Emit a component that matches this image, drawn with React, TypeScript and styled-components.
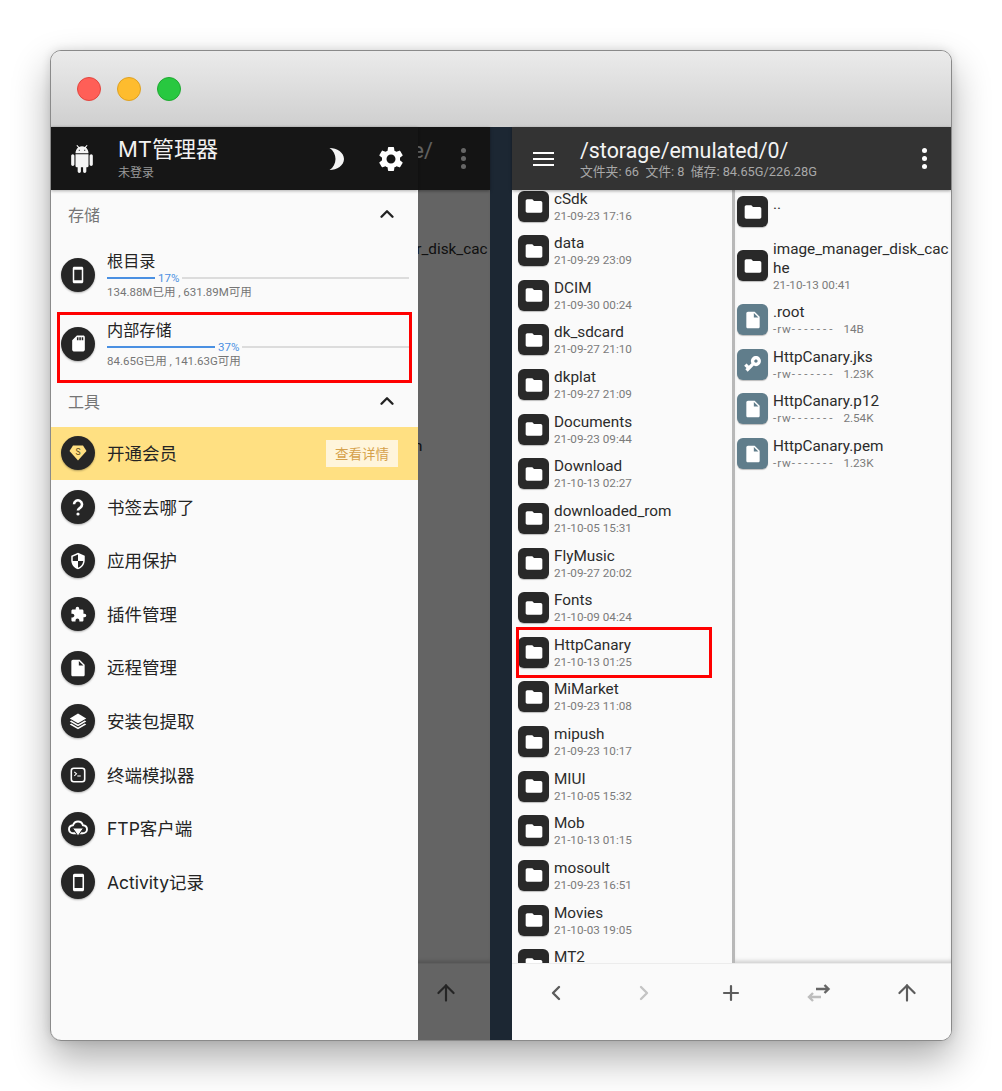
import React from 'react';
import styled, { createGlobalStyle } from 'styled-components';
import { ArrowUp, ChevronLeft, ChevronRight, ChevronUp, Plus } from 'lucide-react';
import {
  MdExtension,
  MdFolder,
  MdInsertDriveFile,
  MdSdStorage,
  MdSecurity,
  MdSettings,
  MdSmartphone,
  MdVpnKey,
} from 'react-icons/md';

const GlobalStyle = createGlobalStyle`
  html, body { margin: 0; padding: 0; background: #fff; }
  body { font-family: Roboto, "Noto Sans CJK SC", sans-serif; }
  * { box-sizing: border-box; }
`;

const Page = styled.div`
  width: 1002px;
  height: 1091px;
  padding: 50px;
  overflow: hidden;
`;

const Window = styled.div`
  width: 902px;
  height: 991px;
  border: 1px solid #8a8a8a;
  border-radius: 11px;
  overflow: hidden;
  box-shadow: 0 18px 38px rgba(0, 0, 0, 0.32), 0 0 10px rgba(0, 0, 0, 0.12);
  display: flex;
  flex-direction: column;
  background: #fafafa;
`;

const TitleBar = styled.div`
  height: 76px;
  flex: none;
  display: flex;
  align-items: center;
  gap: 16px;
  padding-left: 26px;
  background: linear-gradient(#ebebeb, #cfcfcf);
`;

const Light = styled.span<{ $color: string; $edge: string }>`
  width: 24px;
  height: 24px;
  border-radius: 50%;
  background: ${(p) => p.$color};
  border: 1px solid ${(p) => p.$edge};
`;

const Content = styled.div`
  flex: 1;
  display: flex;
  min-height: 0;
`;

const Gutter = styled.div`
  width: 22px;
  flex: none;
  background: #1c2733;
`;

const BackSide = styled.div`
  position: relative;
  width: 439px;
  flex: none;
`;

const Scrim = styled.div`
  position: absolute;
  inset: 0;
  z-index: 1;
  background: rgba(0, 0, 0, 0.6);
`;

/* ---- file pane ---- */

const Pane = styled.div`
  width: 439px;
  height: 100%;
  flex: none;
  display: flex;
  flex-direction: column;
  background: #fafafa;
`;

const PaneHeader = styled.div`
  height: 63px;
  flex: none;
  display: flex;
  align-items: center;
  background: #333;
  color: #fff;
  position: relative;
  z-index: 1;
  box-shadow: 0 1px 3px rgba(0, 0, 0, 0.35);
`;

const MenuBars = styled.div`
  width: 68px;
  flex: none;
  display: flex;
  flex-direction: column;
  align-items: center;
  gap: 4px;
  padding: 1px 5px 0 0;
  & > i {
    display: block;
    width: 21px;
    height: 2px;
    background: #fff;
  }
`;

const PathBlock = styled.div`
  flex: 1;
  min-width: 0;
  white-space: nowrap;
`;

const PathText = styled.div`
  font-size: 21.4px;
  line-height: 26px;
  color: #f4f4f4;
`;

const PathStats = styled.div`
  font-size: 12.8px;
  line-height: 16px;
  color: #a8a8a8;
  white-space: pre;
`;

const Kebab = styled.div`
  width: 54px;
  flex: none;
  display: flex;
  flex-direction: column;
  align-items: center;
  gap: 3px;
  & > i {
    display: block;
    width: 5px;
    height: 5px;
    border-radius: 50%;
    background: #fff;
  }
`;

const Columns = styled.div`
  flex: 1;
  display: flex;
  min-height: 0;
`;

const LeftColumn = styled.div`
  width: 220px;
  flex: none;
  overflow: hidden;
`;

const LeftList = styled.div`
  margin-top: -6.3px;
`;

const RightColumn = styled.div`
  flex: 1;
  overflow: hidden;
  border-left: 3px solid #c4c4c4;
  border-image: linear-gradient(to right, #b8b8b8, #efefef) 1;
  box-shadow: inset 0 -4px 4px -2px rgba(0, 0, 0, 0.18);
`;

const RightList = styled.div`
  margin-top: -0.6px;
`;

const FileRow = styled.div<{ $marked?: boolean; $tall?: boolean; $inset: number; $gap: number }>`
  position: relative;
  min-height: ${(p) => (p.$tall ? '63.4px' : '44.625px')};
  display: flex;
  align-items: center;
  gap: ${(p) => p.$gap}px;
  padding-left: ${(p) => p.$inset}px;
  ${(p) =>
    p.$marked &&
    `
    &::after {
      content: '';
      position: absolute;
      top: -3px;
      bottom: -3px;
      left: 4px;
      right: 20px;
      border: 3px solid #f00;
    }
  `}
`;

const FileTile = styled.div<{ $kind: 'dir' | 'file' }>`
  width: 31px;
  height: 31px;
  flex: none;
  border-radius: 6px;
  display: flex;
  align-items: center;
  justify-content: center;
  color: #fff;
  font-size: 20px;
  background: ${(p) => (p.$kind === 'dir' ? '#292929' : '#607d8b')};
  box-shadow: 0 1px 1px rgba(0, 0, 0, 0.25);
`;

const KeyGlyph = styled(MdVpnKey)`
  transform: rotate(135deg);
`;

const FileText = styled.div`
  flex: 1;
  min-width: 0;
`;

const FileName = styled.div`
  font-size: 15.3px;
  line-height: 19px;
  color: #2b2b2b;
  word-break: break-all;
`;

const FileMeta = styled.div`
  font-size: 11.7px;
  line-height: 14px;
  height: 14px;
  color: #7b7b7b;
  white-space: pre;
`;

const PermHead = styled.span`
  letter-spacing: 0.9px;
`;

const PermTail = styled.span`
  letter-spacing: 3px;
  margin-right: 8px;
`;

const BottomBar = styled.div`
  height: 77px;
  flex: none;
  display: flex;
  background: #fafafa;
  border-top: 1px solid #ececec;
`;

const BarCell = styled.div<{ $tone?: string }>`
  flex: 1;
  height: 58px;
  display: flex;
  align-items: center;
  justify-content: center;
  color: ${(p) => p.$tone || '#5c5c5c'};
`;

/* ---- drawer ---- */

const Drawer = styled.div`
  position: absolute;
  left: 0;
  top: 0;
  bottom: 0;
  width: 367px;
  display: flex;
  flex-direction: column;
  background: #fafafa;
  z-index: 2;
`;

const DrawerHeader = styled.div`
  height: 63px;
  flex: none;
  display: flex;
  align-items: center;
  background: #161616;
  box-shadow: 0 1px 3px rgba(0, 0, 0, 0.3);
  color: #fff;
`;

const DrawerLogo = styled.div`
  width: 67px;
  padding-right: 5px;
  flex: none;
  display: flex;
  justify-content: center;
  line-height: 0;
`;

const DrawerTitles = styled.div`
  flex: 1;
`;

const AppName = styled.div`
  font-family: Inter, "Noto Sans CJK SC", sans-serif;
  font-size: 22px;
  line-height: 27px;
  color: #f2f2f2;
`;

const LoginState = styled.div`
  margin-top: 2px;
  font-size: 12px;
  line-height: 16px;
  color: #9a9a9a;
`;

const HeaderTool = styled.div`
  width: 54px;
  flex: none;
  display: flex;
  justify-content: center;
  line-height: 0;
`;

const SectionHead = styled.div<{ $height: number }>`
  height: ${(p) => p.$height}px;
  flex: none;
  display: flex;
  align-items: center;
  justify-content: space-between;
  padding: 0 20px 2px 17px;
  font-size: 16px;
  color: #757575;
  & > svg {
    color: #222;
  }
`;

const StorageRow = styled.div<{ $marked?: boolean }>`
  position: relative;
  height: 69px;
  flex: none;
  display: flex;
  align-items: center;
  gap: 12px;
  padding: 0 9px 0 10px;
  ${(p) =>
    p.$marked &&
    `
    &::after {
      content: '';
      position: absolute;
      top: 3px;
      bottom: -5px;
      left: 6px;
      right: 6px;
      border: 3px solid #f00;
    }
  `}
`;

const Avatar = styled.div`
  width: 34px;
  height: 34px;
  flex: none;
  border-radius: 50%;
  background: #262626;
  color: #fff;
  display: flex;
  align-items: center;
  justify-content: center;
  font-size: 19px;
  line-height: 0;
  box-shadow: 0 1px 2px rgba(0, 0, 0, 0.3);
`;

const StorageText = styled.div`
  flex: 1;
  min-width: 0;
  padding-top: 1px;
`;

const StorageName = styled.div`
  font-size: 16.2px;
  line-height: 21px;
  color: #242424;
`;

const UsageLine = styled.div`
  display: flex;
  align-items: center;
  height: 13px;
`;

const UsageFill = styled.div`
  height: 2px;
  background: #4a90e2;
`;

const UsageLabel = styled.div`
  font-size: 11.5px;
  line-height: 13px;
  color: #4a90e2;
  margin: 0 3px;
`;

const UsageRest = styled.div`
  flex: 1;
  height: 2px;
  background: #dcdcdc;
`;

const StorageSub = styled.div`
  font-size: 11.5px;
  line-height: 15px;
  color: #757575;
`;

const MenuRow = styled.div<{ $accent?: boolean }>`
  height: 53.6px;
  flex: none;
  display: flex;
  align-items: center;
  gap: 12px;
  padding: 0 20px 0 10px;
  background: ${(p) => (p.$accent ? '#ffe082' : 'transparent')};
`;

const MenuLabel = styled.div`
  flex: 1;
  padding-bottom: 2px;
  font-family: Inter, "Noto Sans CJK SC", sans-serif;
  font-size: 17.5px;
  color: #242424;
`;

const DetailButton = styled.div`
  width: 72px;
  height: 27px;
  display: flex;
  align-items: center;
  justify-content: center;
  font-size: 13.5px;
  color: #d6a24c;
  background: #fff5db;
`;

/* ---- drawn icons ---- */

const AndroidIcon = () => (
  <svg width="26" height="28" viewBox="0 0 24 24" fill="#f5f5f5" preserveAspectRatio="none">
    <path d="M6 18c0 .55.45 1 1 1h1v3.5c0 .83.67 1.5 1.5 1.5s1.5-.67 1.5-1.5V19h2v3.5c0 .83.67 1.5 1.5 1.5s1.5-.67 1.5-1.5V19h1c.55 0 1-.45 1-1V8H6v10zM3.5 8C2.67 8 2 8.67 2 9.5v7c0 .83.67 1.5 1.5 1.5S5 17.33 5 16.5v-7C5 8.67 4.33 8 3.5 8zm17 0c-.83 0-1.5.67-1.5 1.5v7c0 .83.67 1.5 1.5 1.5s1.5-.67 1.5-1.5v-7c0-.83-.67-1.5-1.5-1.5zm-4.97-5.84l1.3-1.3c.2-.2.2-.51 0-.71-.2-.2-.51-.2-.71 0l-1.48 1.48C13.85 1.23 12.95 1 12 1c-.96 0-1.86.23-2.66.63L7.85.15c-.2-.2-.51-.2-.71 0-.2.2-.2.51 0 .71l1.31 1.31C6.97 3.26 6 5.01 6 7h12c0-1.99-.97-3.75-2.47-4.84zM10 5H9V4h1v1zm5 0h-1V4h1v1z" />
  </svg>
);

const MoonIcon = () => (
  <svg width="20" height="24" viewBox="0 0 20 24" fill="#f5f5f5">
    <path d="M2.5 1C10 1 17 5.500 17 12S10 23 2.500 23c3.800-2.500 6-6.300 6-11S6.300 3.500 2.500 1z" />
  </svg>
);

const HelpIcon = () => (
  <svg width="20" height="20" viewBox="0 0 20 20" fill="none">
    <path d="M6 7.300a4 4 0 1 1 6.300 3.300c-1.400.9-2.300 1.500-2.300 3" stroke="#fff" strokeWidth="2.600" />
    <circle cx="10" cy="17" r="1.600" fill="#fff" />
  </svg>
);

const DiamondIcon = () => (
  <svg width="18" height="18" viewBox="0 0 18 18">
    <path d="M4 1.500h10L17.500 7 9 16.500.5 7z" fill="#ffe082" />
    <text x="9" y="10.500" fontSize="8.500" textAnchor="middle" fontFamily="Roboto, sans-serif" fill="#5a4a18">
      S
    </text>
  </svg>
);

const LayersIcon = () => (
  <svg width="18" height="18" viewBox="0 0 24 24" fill="#fff">
    <path d="M12 2 23 8.500l-11 6.500L1 8.500z" />
    <path d="m1 12.500 2-1.200 9 5.300 9-5.300 2 1.200-11 6.500z" />
    <path d="m1 16.500 2-1.200 9 5.300 9-5.300 2 1.200L12 23z" />
  </svg>
);

const TerminalIcon = () => (
  <svg width="20" height="20" viewBox="0 0 20 20" fill="none">
    <rect x="3.300" y="3.300" width="13.400" height="13.400" rx="2.500" stroke="#fff" strokeWidth="1.600" />
    <path d="m6.300 6.800 2.200 2-2.200 2" stroke="#fff" strokeWidth="1.100" />
    <path d="M9.300 11h3.400" stroke="#fff" strokeWidth="1.100" />
  </svg>
);

const FtpCloudIcon = () => (
  <svg width="22" height="22" viewBox="0 0 22 22">
    <path
      d="M11 3.500c2.400 0 4.300 1.500 4.900 3.700 2.400.2 4.100 2 4.100 4 0 2.200-1.900 4.100-4.300 4.100H6.200C3.800 15.300 2 13.500 2 11.200c0-2.100 1.700-3.800 4-4 .8-2.200 2.700-3.700 5-3.700z"
      fill="none"
      stroke="#fff"
      strokeWidth="1.900"
    />
    <path d="M5.500 10h11L11 18z" fill="#fff" stroke="#262626" strokeWidth="1" />
  </svg>
);

const SwapIcon = () => (
  <svg width="24" height="24" viewBox="0 0 24 24" fill="none" strokeWidth="2.400">
    <path d="M9 8h12.500M17.500 4l4 4-4 4" stroke="#666" />
    <path d="M14 16H2M6 12l-4 4 4 4" stroke="#bdbdbd" />
  </svg>
);

/* ---- data ---- */

type Entry = {
  name: string;
  meta?: string;
  perm?: boolean;
  kind?: 'dir' | 'file' | 'key';
  marked?: boolean;
  tall?: boolean;
};

const leftEntries: Entry[] = [
  { name: 'cSdk', meta: '21-09-23 17:16' },
  { name: 'data', meta: '21-09-29 23:09' },
  { name: 'DCIM', meta: '21-09-30 00:24' },
  { name: 'dk_sdcard', meta: '21-09-27 21:10' },
  { name: 'dkplat', meta: '21-09-27 21:09' },
  { name: 'Documents', meta: '21-09-23 09:44' },
  { name: 'Download', meta: '21-10-13 02:27' },
  { name: 'downloaded_rom', meta: '21-10-05 15:31' },
  { name: 'FlyMusic', meta: '21-09-27 20:02' },
  { name: 'Fonts', meta: '21-10-09 04:24' },
  { name: 'HttpCanary', meta: '21-10-13 01:25', marked: true },
  { name: 'MiMarket', meta: '21-09-23 11:08' },
  { name: 'mipush', meta: '21-09-23 10:17' },
  { name: 'MIUI', meta: '21-10-05 15:32' },
  { name: 'Mob', meta: '21-10-13 01:15' },
  { name: 'mosoult', meta: '21-09-23 16:51' },
  { name: 'Movies', meta: '21-10-03 19:05' },
  { name: 'MT2' },
];

const rightEntries: Entry[] = [
  { name: '..' },
  { name: 'image_manager_disk_cache', meta: '21-10-13 00:41', tall: true },
  { name: '.root', perm: true, meta: '14B', kind: 'file' },
  { name: 'HttpCanary.jks', perm: true, meta: '1.23K', kind: 'key' },
  { name: 'HttpCanary.p12', perm: true, meta: '2.54K', kind: 'file' },
  { name: 'HttpCanary.pem', perm: true, meta: '1.23K', kind: 'file' },
];

const tools: { label: string; icon: React.ReactNode }[] = [
  { label: '书签去哪了', icon: <HelpIcon /> },
  { label: '应用保护', icon: <MdSecurity size={18} /> },
  { label: '插件管理', icon: <MdExtension size={17} /> },
  { label: '远程管理', icon: <MdInsertDriveFile size={20} /> },
  { label: '安装包提取', icon: <LayersIcon /> },
  { label: '终端模拟器', icon: <TerminalIcon /> },
  { label: 'FTP客户端', icon: <FtpCloudIcon /> },
  { label: 'Activity记录', icon: <MdSmartphone size={19} /> },
];

const FileItem: React.FC<{ entry: Entry; inset: number; gap: number }> = ({ entry, inset, gap }) => (
  <FileRow $marked={entry.marked} $tall={entry.tall} $inset={inset} $gap={gap}>
    <FileTile $kind={entry.kind ? 'file' : 'dir'}>
      {entry.kind === 'key' ? <KeyGlyph /> : entry.kind === 'file' ? <MdInsertDriveFile /> : <MdFolder />}
    </FileTile>
    <FileText>
      <FileName>{entry.name}</FileName>
      <FileMeta>
        {entry.perm && (
          <>
            <PermHead>-rw</PermHead>
            <PermTail>-------</PermTail>
          </>
        )}
        {entry.meta}
      </FileMeta>
    </FileText>
  </FileRow>
);

const FilePane: React.FC<{ path: string; stats?: string; left: Entry[]; right: Entry[] }> = ({
  path,
  stats,
  left,
  right,
}) => (
  <Pane>
    <PaneHeader>
      <MenuBars>
        <i />
        <i />
        <i />
      </MenuBars>
      <PathBlock>
        <PathText>{path}</PathText>
        <PathStats>{stats || ' '}</PathStats>
      </PathBlock>
      <Kebab>
        <i />
        <i />
        <i />
      </Kebab>
    </PaneHeader>
    <Columns>
      <LeftColumn>
        <LeftList>
          {left.map((entry) => (
            <FileItem key={entry.name} entry={entry} inset={6} gap={5} />
          ))}
        </LeftList>
      </LeftColumn>
      <RightColumn>
        <RightList>
          {right.map((entry) => (
            <FileItem key={entry.name} entry={entry} inset={2} gap={5} />
          ))}
        </RightList>
      </RightColumn>
    </Columns>
    <BottomBar>
      <BarCell>
        <ChevronLeft size={24} strokeWidth={2.4} />
      </BarCell>
      <BarCell $tone="#c4c4c4">
        <ChevronRight size={24} strokeWidth={2.4} />
      </BarCell>
      <BarCell>
        <Plus size={24} strokeWidth={2.2} />
      </BarCell>
      <BarCell>
        <SwapIcon />
      </BarCell>
      <BarCell>
        <ArrowUp size={26} strokeWidth={2} />
      </BarCell>
    </BottomBar>
  </Pane>
);

const StorageItem: React.FC<{
  name: string;
  percent: number;
  fill: number;
  usage: string;
  icon: React.ReactNode;
  marked?: boolean;
}> = ({ name, percent, fill, usage, icon, marked }) => (
  <StorageRow $marked={marked}>
    <Avatar>{icon}</Avatar>
    <StorageText>
      <StorageName>{name}</StorageName>
      <UsageLine>
        <UsageFill style={{ width: fill }} />
        <UsageLabel>{percent}%</UsageLabel>
        <UsageRest />
      </UsageLine>
      <StorageSub>{usage}</StorageSub>
    </StorageText>
  </StorageRow>
);

const App: React.FC = () => (
  <Page>
    <GlobalStyle />
    <Window>
      <TitleBar>
        <Light $color="#ff5f57" $edge="#e2463f" />
        <Light $color="#febc2e" $edge="#dea123" />
        <Light $color="#28c840" $edge="#1fa931" />
      </TitleBar>
      <Content>
        <BackSide>
          <FilePane path="/storage/emulated/0/webcache/" left={[]} right={rightEntries} />
          <Scrim />
          <Drawer>
            <DrawerHeader>
              <DrawerLogo>
                <AndroidIcon />
              </DrawerLogo>
              <DrawerTitles>
                <AppName>MT管理器</AppName>
                <LoginState>未登录</LoginState>
              </DrawerTitles>
              <HeaderTool>
                <MoonIcon />
              </HeaderTool>
              <HeaderTool>
                <MdSettings size={30} />
              </HeaderTool>
            </DrawerHeader>
            <SectionHead $height={50}>
              存储
              <ChevronUp size={22} strokeWidth={2.6} />
            </SectionHead>
            <StorageItem
              name="根目录"
              percent={17}
              fill={48}
              usage="134.88M已用 , 631.89M可用"
              icon={<MdSmartphone size={18} />}
            />
            <StorageItem
              name="内部存储"
              percent={37}
              fill={108}
              usage="84.65G已用 , 141.63G可用"
              icon={<MdSdStorage />}
              marked
            />
            <SectionHead $height={48.7}>
              工具
              <ChevronUp size={22} strokeWidth={2.6} />
            </SectionHead>
            <MenuRow $accent>
              <Avatar>
                <DiamondIcon />
              </Avatar>
              <MenuLabel>开通会员</MenuLabel>
              <DetailButton>查看详情</DetailButton>
            </MenuRow>
            {tools.map((tool) => (
              <MenuRow key={tool.label}>
                <Avatar>{tool.icon}</Avatar>
                <MenuLabel>{tool.label}</MenuLabel>
              </MenuRow>
            ))}
          </Drawer>
        </BackSide>
        <Gutter />
        <FilePane
          path="/storage/emulated/0/"
          stats={'文件夹: 66  文件: 8  储存: 84.65G/226.28G'}
          left={leftEntries}
          right={rightEntries}
        />
      </Content>
    </Window>
  </Page>
);

export default App;
